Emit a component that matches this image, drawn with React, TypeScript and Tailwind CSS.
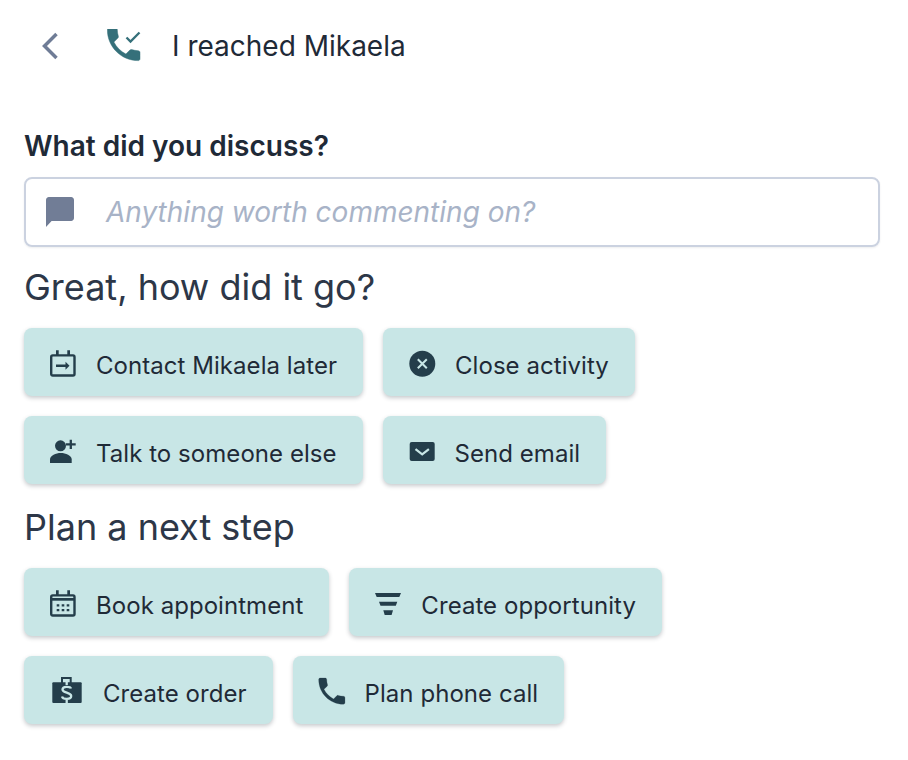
import type { ReactNode } from "react";

const BG = "#c8e6e6";

const phonePath =
  "M6.62 10.79c1.44 2.83 3.76 5.14 6.59 6.59l2.2-2.2c.27-.27.67-.36 1.02-.24 1.12.37 2.33.57 3.57.57.55 0 1 .45 1 1V20c0 .55-.45 1-1 1-9.39 0-17-7.61-17-17 0-.55.45-1 1-1h3.5c.55 0 1 .45 1 1 0 1.25.2 2.45.57 3.57.11.35.03.74-.25 1.02l-2.2 2.2z";

function Icon({ children }: { children: ReactNode }) {
  return (
    <svg viewBox="0 0 32 32" className="h-8 w-8 shrink-0 text-[#243e4b]" fill="currentColor">
      {children}
    </svg>
  );
}

// shared calendar frame with the two binder tabs
const CalendarFrame = (
  <>
    <path d="M8 2.300h2.700v5H8zM19.300 2.300H22v5h-2.700z" />
    <rect x="3.200" y="7.400" width="23.300" height="20.100" rx="1.500" fill="none" stroke="currentColor" strokeWidth="2.400" />
  </>
);

const LaterIcon = (
  <Icon>
    {CalendarFrame}
    <path d="M8 16.500h9.500v-2.800l4 4-4 4v-2.800H8z" />
  </Icon>
);

const CloseIcon = (
  <Icon>
    <circle cx="15.300" cy="15.700" r="13" />
    <path d="M10.800 11.200l9 9M19.800 11.200l-9 9" stroke={BG} strokeWidth="2" fill="none" />
  </Icon>
);

const PersonIcon = (
  <Icon>
    <circle cx="12.500" cy="9.800" r="5.500" />
    <path d="M2 27v-3.500C2 19.500 8 17 12.800 17s10.900 2.500 10.900 6.500V27z" />
    <path d="M22.800 3.700v9.300M18 8.300h9.700" stroke={BG} strokeWidth="5" fill="none" />
    <path d="M22.800 3.700v9.300M18 8.300h9.700" stroke="currentColor" strokeWidth="2.300" fill="none" />
  </Icon>
);

const MailIcon = (
  <Icon>
    <rect x="2.700" y="6" width="25" height="19" rx="2" />
    <path d="M8.500 13.200l6.700 5.200 6.700-5.200" stroke={BG} strokeWidth="2.200" fill="none" />
  </Icon>
);

const CalendarIcon = (
  <Icon>
    {CalendarFrame}
    <path d="M3 10h23.700v2.700H3z" />
    <path d="M8.700 16.300h2.600v2.200H8.700zM13.700 16.300h2.600v2.200h-2.600zM18.700 16.300h2.600v2.200h-2.600zM8.700 21h2.600v2.300H8.700zM13.700 21h2.600v2.300h-2.600zM18.700 21h2.600v2.300h-2.600z" />
  </Icon>
);

const FunnelIcon = (
  <Icon>
    <path d="M2 5h26l-1.700 4H3.700zM6 13.700h18.300l-1.500 4H7.500zM10.300 22.300H20l-1.400 4.700h-6.900z" />
  </Icon>
);

const PhoneIcon = (
  <Icon>
    <path transform="translate(-2.700 -2.400) scale(1.460)" d={phonePath} stroke="currentColor" strokeWidth=".15" />
  </Icon>
);

const OrderIcon = (
  <svg viewBox="0 0 39 32" className="h-8 w-[39px] shrink-0 text-[#243e4b]" fill="currentColor">
    <path d="M13 1h10.700v6.500h-2V3h-6.700v4.500h-2z" />
    <rect x="4.300" y="6.300" width="29.400" height="20.700" rx="1" />
    <path d="M18.700 5v4M18.700 23v5M23 12.500c-.6-2-8.500-2.700-8.500 1 0 3.700 8.700 2.600 8.700 6.500 0 3.700-8.300 3.700-9.200.5" fill="none" stroke={BG} strokeWidth="2.300" />
  </svg>
);

function ActionButton({ icon, label }: { icon: ReactNode; label: string }) {
  return (
    <button className="flex h-[68px] items-center gap-4 rounded-lg bg-[#c8e6e6] pl-6 pr-[26px] pt-1 text-[24px] leading-8 tracking-[0.05px] text-[#1f2a37] shadow-[0_2px_4px_rgba(31,42,55,0.25)]">
      {icon}
      <span className="pt-[3px]">{label}</span>
    </button>
  );
}

export default function App() {
  return (
    <div className="min-h-[760px] bg-white pl-6 pr-7 font-['Inter',sans-serif] text-[#1f2a37]">
      <header className="flex h-[92px] items-center">
        <svg viewBox="0 0 18 28" className="ml-[17px] h-7 w-[18px] text-[#6f7c96]" fill="none" stroke="currentColor" strokeWidth="3.500">
          <path d="M15.500 2L3.500 14l12 12" />
        </svg>
        <svg viewBox="0 0 34 34" className="ml-[48px] h-[34px] w-[34px] text-[#35707a]" fill="currentColor">
          <path transform="translate(-5.100 -6.500) scale(1.815)" d={phonePath} stroke="currentColor" strokeWidth=".25" />
          <path d="M19.500 8.500l4 4 9-9" fill="none" stroke="currentColor" strokeWidth="2.300" />
        </svg>
        <h1 className="ml-[31px] text-[28px] font-normal leading-8">I reached Mikaela</h1>
      </header>

      <label className="mt-[38px] block text-[28px] font-semibold leading-8">What did you discuss?</label>
      <div className="mt-[15px] flex h-[70px] items-center rounded-lg border-2 border-[#cbd2e0] pl-5 shadow-[0_1px_2px_rgba(31,42,55,0.08)]">
        <svg viewBox="2 2 20 20" className="h-[30px] w-[28px] shrink-0 text-[#717d96]" fill="currentColor" preserveAspectRatio="none">
          <path d="M20 2H4c-1.100 0-2 .9-2 2v18l4-4h14c1.100 0 2-.9 2-2V4c0-1.100-.9-2-2-2z" />
        </svg>
        <span className="ml-8 text-[28px] italic leading-8 text-[#a8b3c7]">Anything worth commenting on?</span>
      </div>

      <h2 className="mt-5 text-[36px] font-normal leading-10 text-[#2d3748]">Great, how did it go?</h2>
      <div className="mt-[21px] flex flex-col gap-5">
        <div className="flex gap-5">
          <ActionButton icon={LaterIcon} label="Contact Mikaela later" />
          <ActionButton icon={CloseIcon} label="Close activity" />
        </div>
        <div className="flex gap-5">
          <ActionButton icon={PersonIcon} label="Talk to someone else" />
          <ActionButton icon={MailIcon} label="Send email" />
        </div>
      </div>

      <h2 className="mt-[23px] text-[36px] font-normal leading-10 text-[#2d3748]">Plan a next step</h2>
      <div className="mt-[21px] flex flex-col gap-5">
        <div className="flex gap-5">
          <ActionButton icon={CalendarIcon} label="Book appointment" />
          <ActionButton icon={FunnelIcon} label="Create opportunity" />
        </div>
        <div className="flex gap-5">
          <ActionButton icon={OrderIcon} label="Create order" />
          <ActionButton icon={PhoneIcon} label="Plan phone call" />
        </div>
      </div>
    </div>
  );
}
